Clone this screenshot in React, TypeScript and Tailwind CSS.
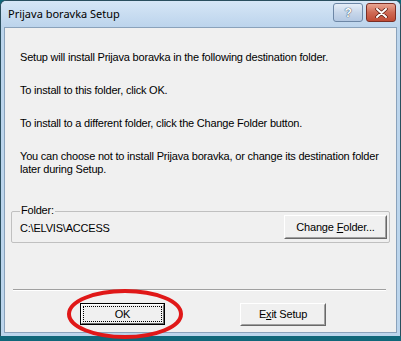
import React from 'react'

const ui = { fontFamily: '"Liberation Sans", Arial, sans-serif' }

function ClassicButton({ children, isDefault = false, className = '' }: { children: React.ReactNode; isDefault?: boolean; className?: string }) {
  return (
    <div
      className={`flex ${isDefault ? 'border border-black' : 'border border-[#696969] border-l-white border-t-white'} bg-[#f0f0f0] ${className}`}
    >
      <div
        className={`flex flex-1 ${isDefault ? 'border border-white border-r-[#696969] border-b-[#696969]' : 'border border-[#f0f0f0] border-r-[#a0a0a0] border-b-[#a0a0a0]'}`}
      >
        <div
          className={`flex flex-1 items-center justify-center text-[11px] text-black ${isDefault ? 'm-[1px] border border-dotted border-black' : ''}`}
        >
          {children}
        </div>
      </div>
    </div>
  )
}

export default function App() {
  return (
    <div className="relative w-[401px] h-[341px] bg-[#10677a] overflow-hidden tracking-[-0.2px]" style={ui}>
      {/* Window frame */}
      <div className="flex flex-col h-[336px] w-[401px] rounded-t-[6px] border border-b-0 border-[#2a4e5e] bg-[#bcd5ec]">
        {/* Title bar */}
        <div className="flex h-[26px] items-center justify-between pl-[7px] pr-[4px] rounded-t-[5px] bg-gradient-to-b from-[#d6e6f6] to-[#bcd4ec]">
          <span className="text-[11px] text-black pt-[1px] tracking-normal" style={{ fontFamily: '"Noto Sans", "Open Sans", sans-serif' }}>
            Prijava boravka Setup
          </span>
          <div className="flex gap-[3px] self-start mt-[2px]">
            <div className="flex h-[19px] w-[30px] items-center justify-center rounded-[3px] border border-[#6d87a6] bg-gradient-to-b from-[#e6eef8] via-[#c8d7ea] to-[#b3c8e2]">
              <span className="text-[12px] font-bold text-white leading-none" style={{ textShadow: '0 0 1px #33475f, 0 0 1px #33475f' }}>?</span>
            </div>
            <div className="flex h-[19px] w-[30px] items-center justify-center rounded-[3px] border border-[#7a2e25] bg-gradient-to-b from-[#e8a593] via-[#cf6a55] to-[#c04a34]">
              <svg width="13" height="10" viewBox="0 0 13 10">
                <path d="M2 1 L11 9 M11 1 L2 9" stroke="#5a1a10" strokeWidth="3.4" strokeLinecap="round" />
                <path d="M2 1 L11 9 M11 1 L2 9" stroke="#ffffff" strokeWidth="2" strokeLinecap="round" />
              </svg>
            </div>
          </div>
        </div>

        {/* Client area */}
        <div className="flex flex-col flex-1 mx-[3px] mb-[3px] border border-[#8aa2bb] bg-[#f0f0f0] text-[11px] text-black">
          <div className="flex flex-col gap-[20px] pl-[15px] pt-[23px] leading-[13px]">
            <p>Setup will install Prijava boravka in the following destination folder.</p>
            <p>To install to this folder, click OK.</p>
            <p>To install to a different folder, click the Change Folder button.</p>
            <p>
              You can choose not to install Prijava boravka, or change its destination folder
              <br />
              later during Setup.
            </p>
          </div>

          {/* Folder group */}
          <div className="relative mt-[35px] ml-[6px] mr-[6px] h-[32px] border border-[#c0c0c0] rounded-[2px]">
            <span className="absolute left-[8px] top-[-8px] bg-[#f0f0f0] px-[1px] leading-[13px]">Folder:</span>
            <div className="flex h-full items-center justify-between pl-[8px] pr-[2px] pb-[1px]">
              <span className="mt-[3px]">C:\ELVIS\ACCESS</span>
              <ClassicButton className="h-[24px] w-[103px] mt-[1px]">
                Change <span className="underline ml-[3px]">F</span>older...
              </ClassicButton>
            </div>
          </div>

          {/* Separator */}
          <div className="mt-[46px] ml-[8px] mr-[10px] border-t border-[#a0a0a0] border-b border-b-white" />

          {/* Buttons */}
          <div className="flex mt-[12px] pl-[75px] gap-[75px]">
            <ClassicButton isDefault className="h-[22px] w-[85px]">OK</ClassicButton>
            <ClassicButton className="h-[23px] w-[86px]">
              E<span className="underline">x</span>it Setup
            </ClassicButton>
          </div>
        </div>
      </div>

      {/* Red annotation around OK */}
      <svg className="absolute left-[64px] top-[286px]" width="122" height="54" viewBox="0 0 122 54">
        <ellipse cx="61" cy="28" rx="56" ry="23" fill="none" stroke="#e01818" strokeWidth="4" />
      </svg>
    </div>
  )
}
